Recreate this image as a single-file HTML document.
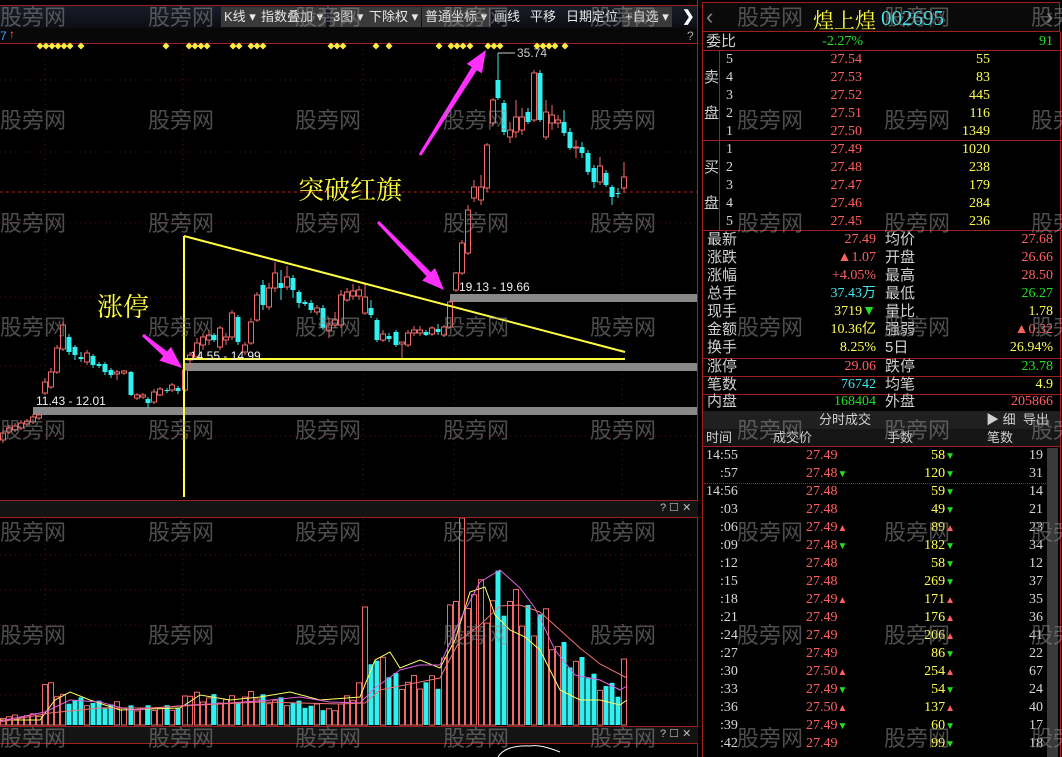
<!DOCTYPE html>
<html><head><meta charset="utf-8">
<style>
*{margin:0;padding:0;box-sizing:border-box}
body{width:1062px;height:757px;background:#000;overflow:hidden;position:relative;font-family:"Liberation Sans","Noto Sans CJK SC",sans-serif}
.a{position:absolute;white-space:nowrap}
.tb{position:absolute;top:7px;height:20px;background:#3a3a3a;color:#e8e8e8;font-size:13px;line-height:20px;padding:0 3px}
.rp{font-family:"Liberation Serif","Noto Sans CJK SC",serif;font-size:14px;line-height:18px}
.lb{color:#d0d0d0;font-family:"Liberation Sans","Noto Sans CJK SC",sans-serif;font-size:15px}
.r{color:#ff6060}.y{color:#ffff50}.c{color:#40e8f0}.g{color:#20e020}.w{color:#d8d8d8}
.hl{position:absolute;left:702px;width:360px;height:1px;background:#a02020}
.wm{position:absolute;color:rgba(140,140,140,0.55);font-size:22px;font-family:"Noto Sans CJK SC",sans-serif;white-space:nowrap}
</style></head><body>
<!-- left chart -->
<div class="a" style="left:0;top:5px;width:698px;height:23px;background:linear-gradient(#1a1e2a,#0c0e14)"></div>
<div class="a" style="left:0;top:5px;width:698px;height:1px;background:#a02020"></div>
<div class="a" style="left:0;top:28px;width:698px;height:15px;background:#080808"></div>
<div class="a" style="left:0;top:43px;width:698px;height:1px;background:#a02020"></div>
<div class="tb" style="left:221px">K线 ▾</div>
<div class="tb" style="left:258px">指数叠加 ▾</div>
<div class="tb" style="left:330px">3图 ▾</div>
<div class="tb" style="left:366px">下除权 ▾</div>
<div class="tb" style="left:422px">普通坐标 ▾</div>
<div class="a" style="left:494px;top:7px;color:#e8e8e8;font-size:13px;line-height:20px">画线</div>
<div class="a" style="left:530px;top:7px;color:#e8e8e8;font-size:13px;line-height:20px">平移</div>
<div class="a" style="left:566px;top:7px;color:#e8e8e8;font-size:13px;line-height:20px">日期定位</div>
<div class="tb" style="left:622px">+自选 ▾</div>
<div class="a" style="left:682px;top:7px;color:#fff;font-size:15px;font-weight:bold">❯</div>
<div class="a" style="left:0;top:29px;color:#3aa0ff;font-size:12px">7</div>
<div class="a" style="left:9px;top:27px;color:#ff6060;font-size:12px">↑</div>
<div class="a" style="left:687px;top:29px;color:#aaa;font-size:12px">?</div>
<div class="a" style="left:697px;top:0;width:1px;height:757px;background:#a02020"></div>

<svg class="a" style="left:0;top:0" width="698" height="757" id="sv"></svg>

<!-- volume headers -->
<div class="a" style="left:0;top:500px;width:698px;height:18px;background:#141414;border-top:1px solid #a02020;border-bottom:1px solid #a02020"></div>
<div class="a" style="left:660px;top:501px;color:#bbb;font-size:11px">? ☐ ✕</div>
<div class="a" style="left:0;top:726px;width:698px;height:18px;background:#141414;border-top:1px solid #a02020;border-bottom:1px solid #a02020"></div>
<div class="a" style="left:660px;top:727px;color:#bbb;font-size:11px">? ☐ ✕</div>
<div class="a" style="left:180px;top:80px;font-size:26px;color:#ffff40;font-family:'Noto Serif CJK SC',serif;left:97px;top:287px">涨停</div>
<div class="a" style="left:298px;top:170px;font-size:26px;color:#ffff40;font-family:'Noto Serif CJK SC',serif">突破红旗</div>
<div class="a" style="left:36px;top:394px;color:#eee;font-size:12px">11.43 - 12.01</div>
<div class="a" style="left:190px;top:349px;color:#eee;font-size:12px">14.55 - 14.99</div>
<div class="a" style="left:459px;top:280px;color:#eee;font-size:12px">19.13 - 19.66</div>
<div class="a" style="left:517px;top:46px;color:#ccc;font-size:12px">35.74</div>

<!-- right panel -->
<div class="a" style="left:702px;top:0;width:360px;height:757px;background:#000"></div>
<div class="a" style="left:702px;top:2px;width:358px;height:30px;background:#0a0a0a;border:1px solid #a02020"></div>
<div class="a" style="left:706px;top:4px;color:#888;font-size:22px">‹</div>
<div class="a" style="left:1046px;top:4px;color:#888;font-size:22px">›</div>
<div class="a" style="left:813px;top:5px;color:#ffff40;font-size:21px;font-family:'Noto Serif CJK SC',serif">煌上煌</div>
<div class="a" style="left:881px;top:6px;color:#40e8f0;font-size:21px;font-family:'Liberation Serif',serif">002695</div>
<div class="hl" style="top:50px"></div><div class="hl" style="top:140px"></div><div class="hl" style="top:230px"></div>
<div class="hl" style="top:358px"></div><div class="hl" style="top:376px"></div><div class="hl" style="top:394px"></div>
<div class="a" style="left:719px;top:51px;width:1px;height:179px;background:#a02020"></div>
<div class="a" style="left:1060px;top:32px;width:1px;height:725px;background:#a02020"></div>
<div class="a" style="left:702px;top:32px;width:1px;height:725px;background:#a02020"></div>
<div id="rp"></div>
<div class="a" style="left:703px;top:411px;width:357px;height:18px;background:#202020"></div>
<div class="a lb" style="left:819px;top:411px;font-size:13px;line-height:18px">分时成交</div>
<div class="a lb" style="left:986px;top:411px;font-size:13px;line-height:18px">▶ 细 &nbsp;导出</div>
<div class="a" style="left:703px;top:429px;width:357px;height:18px;background:#151515;border-bottom:1px solid #a02020"></div>
<div class="a lb" style="left:706px;top:429px;font-size:13px;line-height:18px">时间</div>
<div class="a lb" style="left:773px;top:429px;font-size:13px;line-height:18px">成交价</div>
<div class="a lb" style="left:887px;top:429px;font-size:13px;line-height:18px">手数</div>
<div class="a lb" style="left:987px;top:429px;font-size:13px;line-height:18px">笔数</div>
<div class="a" style="left:1047px;top:448px;width:11px;height:309px;background:#3a3a3a"></div>
<div class="a" style="left:704px;top:483px;width:342px;border-top:1px dotted #a02020"></div>
<div id="wm"></div>
<script>
var S='';
function L(x1,y1,x2,y2,c,w,d){S+='<line x1="'+x1+'" y1="'+y1+'" x2="'+x2+'" y2="'+y2+'" stroke="'+c+'" stroke-width="'+(w||1)+'"'+(d?' stroke-dasharray="'+d+'"':'')+'/>';}
function R(x,y,w,h,f,s){S+='<rect x="'+x+'" y="'+y+'" width="'+w+'" height="'+h+'" fill="'+f+'"'+(s?' stroke="'+s+'"':'')+'/>';}
// grid
[80,152,223,297,366,436].forEach(function(y){L(0,y,697,y,'#5a1010',1,'1 4')});
[45,183,363,454,622].forEach(function(x){L(x,44,x,497,'#5a1010',1,'1 4');L(x,519,x,725,'#5a1010',1,'1 4')});
[555,590,625,660,695].forEach(function(y){L(0,y,697,y,'#5a1010',1,'1 4')});
L(0,192,697,192,'#b02020',1,'3 3');
// bands
R(33,407,664,8,'#888');R(185,363,512,8,'#888');R(450,294,247,8,'#888');
// diamonds
var dm=[40,46,52,58,64,70,81,166,189,195,201,207,233,239,251,257,263,331,337,343,376,389,439,451,457,463,470,488,494,500,537,543,549,555,565];
dm.forEach(function(x){S+='<polygon points="'+x+',42.5 '+(x+3.5)+',46 '+x+',49.5 '+(x-3.5)+',46" fill="#ffee40"/>'});
var C=[[3,433,440,430,443,'r'],[9,428,432,425,434,'r'],[15,426,430,423,432,'r'],[21,423,428,420,430,'r'],[27,421,424,419,426,'r'],[33,417,422,414,424,'r'],[39,415,418,413,420,'r'],[45,382,393,378,395,'r'],[51,372,387,368,389,'r'],[57,348,372,345,374,'r'],[63,325,349,322,351,'r'],[69,337,352,334,355,'c'],[75,347,355,345,360,'c'],[81,357,359,352,362,'c'],[87,353,362,350,365,'r'],[93,356,365,354,368,'c'],[99,364,366,362,368,'c'],[105,364,372,362,375,'c'],[111,370,375,368,378,'c'],[117,372,374,370,380,'r'],[124,371,373,370,375,'r'],[131,372,395,371,396,'c'],[137,395,398,393,400,'r'],[143,395,397,393,399,'r'],[148,399,403,397,408,'c'],[154,392,402,389,404,'r'],[160,389,395,387,396,'r'],[167,390,391,388,393,'c'],[172,385,390,383,392,'r'],[178,388,391,386,394,'c'],[185,370,390,368,392,'r'],[190,355,360,352,368,'r'],[197,343,357,338,360,'r'],[203,337,345,334,350,'r'],[209,335,340,330,345,'r'],[214,335,340,333,342,'c'],[220,328,347,326,350,'r'],[226,337,340,333,345,'r'],[232,313,337,310,340,'r'],[238,317,342,315,345,'c'],[245,345,352,342,355,'r'],[251,322,343,318,345,'r'],[257,295,320,292,322,'r'],[263,285,305,280,310,'c'],[269,288,307,283,310,'r'],[275,273,288,262,292,'r'],[281,283,288,270,300,'c'],[287,277,287,266,290,'r'],[293,278,290,275,298,'c'],[299,292,303,290,308,'c'],[305,302,304,300,306,'c'],[311,303,310,300,313,'c'],[317,308,312,305,315,'r'],[323,308,328,305,330,'c'],[329,325,330,318,338,'r'],[335,320,325,312,328,'r'],[341,295,325,290,328,'r'],[347,292,300,288,302,'r'],[353,291,296,284,300,'r'],[359,290,296,286,300,'r'],[365,297,313,284,315,'r'],[371,308,315,300,318,'c'],[377,320,340,318,342,'c'],[383,334,340,330,342,'r'],[389,336,339,333,342,'c'],[396,332,345,330,347,'c'],[402,342,344,342,358,'r'],[408,333,345,330,347,'r'],[414,330,333,326,336,'r'],[420,330,333,326,336,'r'],[426,332,335,330,336,'c'],[432,328,334,326,336,'r'],[438,329,332,324,335,'c'],[444,327,335,325,337,'r'],[450,302,327,300,328,'r'],[456,273,290,272,292,'r'],[462,243,273,240,275,'r'],[468,210,253,205,255,'r'],[474,187,198,180,202,'r'],[481,187,200,175,205,'r'],[487,145,188,143,192,'r'],[493,100,123,98,126,'r'],[498,80,98,53,100,'c'],[504,103,132,100,135,'c'],[510,130,137,122,143,'r'],[516,117,132,100,138,'r'],[522,117,130,108,135,'r'],[528,112,122,108,124,'c'],[534,73,120,70,122,'r'],[540,73,120,70,122,'c'],[546,112,137,100,140,'r'],[552,115,123,105,130,'r'],[558,120,123,115,128,'r'],[564,122,133,110,136,'c'],[570,132,148,128,150,'c'],[576,147,148,140,158,'r'],[582,147,153,142,158,'c'],[588,153,172,150,175,'c'],[594,168,182,165,188,'c'],[600,166,182,157,185,'r'],[606,173,185,170,187,'c'],[612,187,197,185,205,'c'],[618,193,194,188,198,'c'],[624,177,188,162,193,'r']];
L(498,53,515,53,'#ccc');
var RC='#f06a6a',CC='#30f0f0';
C.forEach(function(k){var x=k[0],col=k[5]=='r'?RC:CC;L(x,k[3],x,k[4],col);var h=Math.max(1,k[2]-k[1]);if(k[5]=='r'){S+='<rect x="'+(x-2.5)+'" y="'+k[1]+'" width="5" height="'+h+'" fill="#000" stroke="'+RC+'"/>'}else R(x-2.5,k[1],5,h,CC)});
// yellow figure
L(184,236,184,497,'#ffff40',2);L(184,236,625,352,'#ffff40',2);L(184,359,625,359,'#ffff40',2);
// arrows
function A(x1,y1,x2,y2){var dx=x2-x1,dy=y2-y1,l=Math.sqrt(dx*dx+dy*dy),ux=dx/l,uy=dy/l,px=-uy,py=ux,bx=x2-ux*22,by=y2-uy*22;
S+='<polygon points="'+(x1+px*1.5)+','+(y1+py*1.5)+' '+(bx+px*3)+','+(by+py*3)+' '+(bx+px*9)+','+(by+py*9)+' '+x2+','+y2+' '+(bx-px*9)+','+(by-py*9)+' '+(bx-px*3)+','+(by-py*3)+' '+(x1-px*1.5)+','+(y1-py*1.5)+'" fill="#ff30ff"/>';}
A(143,335,182,368);A(378,222,444,290);A(420,155,486,50);
// volume
var VK=[[0,10],[40,12],[45,47],[60,35],[100,25],[130,22],[180,20],[190,38],[230,30],[260,35],[300,25],[330,18],[358,40],[365,118],[370,86],[380,70],[400,55],[440,50],[450,120],[462,207],[470,170],[490,145],[498,160],[520,130],[540,140],[560,90],[590,60],[620,40],[627,66]];
function vb(x){for(var i=1;i<VK.length;i++){if(x<=VK[i][0]){var a=VK[i-1],b=VK[i];return a[1]+(b[1]-a[1])*(x-a[0])/(b[0]-a[0])}}return 40}
C.forEach(function(k,i){var x=k[0],h=vb(x)*(0.65+0.35*((i*37)%11)/10);if(x==365)h=118;if(x==462)h=207;if(x==624)h=66;
if(k[5]=='r')S+='<rect x="'+(x-2.5)+'" y="'+(725-h)+'" width="5" height="'+h+'" fill="#000" stroke="'+RC+'"/>';else R(x-2.5,725-h,5,h,CC)});
function P(pts,c){S+='<polyline points="'+pts+'" fill="none" stroke="'+c+'" stroke-width="1"/>'}
P('0,720 40,720 55,700 70,692 90,700 120,710 180,708 200,695 230,700 260,697 290,692 320,700 360,697 375,660 390,652 400,668 420,660 440,668 455,640 470,592 485,587 495,615 510,630 525,637 540,650 560,690 580,700 600,700 620,705 627,700','#ffff60');
P('0,721 45,712 70,700 100,702 130,710 190,705 230,703 270,700 300,697 330,702 360,703 375,688 400,670 420,665 440,665 460,620 480,582 500,570 520,588 535,608 555,650 575,675 600,680 620,690 627,686','#e060e0');
P('0,722 50,713 100,708 150,708 200,705 260,702 300,703 340,704 365,703 380,690 420,682 440,678 460,640 480,625 500,606 520,605 540,612 560,630 580,648 600,664 627,678','#f07070');
S+='<path d="M498,757 Q505,745 530,746 Q540,744 560,752" fill="none" stroke="#fff"/>';
document.getElementById('sv').innerHTML=S;
// right panel rows
var H='';function T(x,y,t,cl,al,fs){H+='<div class="a rp '+cl+'" style="'+(al?'right:'+(1062-x)+'px':'left:'+x+'px')+';top:'+(y-9)+'px'+(fs?';font-size:'+fs+'px':'')+'">'+t+'</div>'}
T(706,42,'委比','lb');T(863,42,'-2.27%','g',1);T(1053,42,'91','g',1);
T(704,78,'卖','lb');T(704,114,'盘','lb');T(704,168,'买','lb');T(704,204,'盘','lb');
var sp=[['5','27.54','55'],['4','27.53','83'],['3','27.52','445'],['2','27.51','116'],['1','27.50','1349']],bp=[['1','27.49','1020'],['2','27.48','238'],['3','27.47','179'],['4','27.46','284'],['5','27.45','236']];
sp.forEach(function(r,i){var y=60+i*18;T(726,y,r[0],'w');T(862,y,r[1],'r',1);T(990,y,r[2],'y',1)});
bp.forEach(function(r,i){var y=150+i*18;T(726,y,r[0],'w');T(862,y,r[1],'r',1);T(990,y,r[2],'y',1)});
var st=[['最新','27.49','r','均价','27.68','r'],['涨跌','▲1.07','r','开盘','26.66','r'],['涨幅','+4.05%','r','最高','28.50','r'],['总手','37.43万','c','最低','26.27','g'],['现手','3719<span class="g">▼</span>','y','量比','1.78','y'],['金额','10.36亿','y','强弱','▲0.32','r'],['换手','8.25%','y','5日','26.94%','y'],['涨停','29.06','r','跌停','23.78','g'],['笔数','76742','c','均笔','4.9','y'],['内盘','168404','g','外盘','205866','r']];
var sy=[240,258,276,294,312,330,348,367,385,402];
st.forEach(function(r,i){var y=sy[i];T(707,y,r[0],'lb');T(876,y,r[1],r[2],1);T(885,y,r[3],'lb');T(1053,y,r[4],r[5],1)});
var tr=[['14:55','27.49','','58','d','19'],[':57','27.48','d','120','d','31'],['14:56','27.48','','59','d','14'],[':03','27.48','','49','d','21'],[':06','27.49','u','89','u','23'],[':09','27.48','d','182','d','34'],[':12','27.48','','58','d','12'],[':15','27.48','','269','d','37'],[':18','27.49','u','171','u','35'],[':21','27.49','','176','u','36'],[':24','27.49','','206','u','41'],[':27','27.49','','86','d','22'],[':30','27.50','u','254','u','67'],[':33','27.49','d','54','d','24'],[':36','27.50','u','137','u','40'],[':39','27.49','d','60','d','17'],[':42','27.49','','99','d','18']];
function ar(a){return a=='u'?'<span class="r" style="font-size:10px">▲</span>':a=='d'?'<span class="g" style="font-size:10px">▼</span>':''}
tr.forEach(function(r,i){var y=456+i*18,t=r[0];T(t.length>3?706:720,y,t,'w');
H+='<div class="a rp r" style="left:806px;top:'+(y-9)+'px">'+r[1]+ar(r[2])+'</div>';
H+='<div class="a rp y" style="right:'+(1062-955)+'px;top:'+(y-9)+'px">'+r[3]+ar(r[4])+'</div>';
T(1043,y,r[5],'w',1)});
document.getElementById('rp').innerHTML=H;
var W='',xs=[0,148,295,443,590,737,884,1031],ys=[0,103,206,310,413,515,618,721];
ys.forEach(function(y){xs.forEach(function(x){W+='<div class="wm" style="left:'+x+'px;top:'+y+'px">股旁网</div>'})});
document.getElementById('wm').innerHTML=W;
</script>
</body></html>
